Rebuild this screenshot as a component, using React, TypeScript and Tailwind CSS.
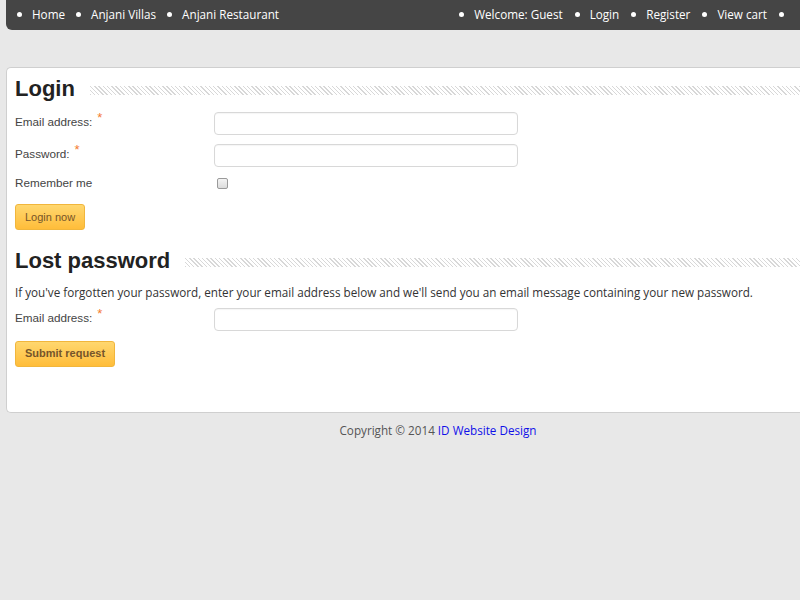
import React from "react";

const navL = ["Home", "Anjani Villas", "Anjani Restaurant"];
const navR = ["Welcome: Guest", "Login", "Register", "View cart"];

function Bullet() {
  return <span className="inline-block w-[5px] h-[5px] rounded-full bg-white mr-[10px]" />;
}

function Heading({ children }: { children: React.ReactNode }) {
  return (
    <div className="flex items-center h-[22px]">
      <h2 className="text-[22px] font-bold text-[#222] leading-[22px] font-['Liberation_Sans',Arial,sans-serif] pr-[15px]">{children}</h2>
      <div className="flex-1 h-[9px] mt-[2px] bg-[repeating-linear-gradient(45deg,#d8d8d8_0px,#d8d8d8_1px,#ffffff_1px,#ffffff_3px)]" />
    </div>
  );
}

function Req() {
  return <span className="text-[#f47a30] text-[13px] relative -top-[4px] ml-[5px]">*</span>;
}

function Row({ label, req, children }: { label: string; req?: boolean; children: React.ReactNode }) {
  return (
    <div className="flex items-start">
      <div className="w-[199px] text-[11.7px] leading-[20px] text-[#444] font-['Liberation_Sans',Arial,sans-serif]">
        {label}
        {req && <Req />}
      </div>
      {children}
    </div>
  );
}

function Input() {
  return <div className="w-[304px] h-[23px] border border-[#d8d8d8] rounded-[4px] bg-white shadow-[inset_0_1px_1px_rgba(0,0,0,0.04)]" />;
}

function Btn({ children, bold }: { children: React.ReactNode; bold?: boolean }) {
  return (
    <div className={`inline-flex items-center h-[26px] px-[9px] rounded-[3px] border border-[#f1b63c] bg-[linear-gradient(#ffd76f,#ffbd3a)] text-[11px] text-[#76552a] font-['Liberation_Sans',Arial,sans-serif] ${bold ? "font-bold" : ""}`}>
      {children}
    </div>
  );
}

export default function App() {
  return (
    <div className="w-[800px] h-[600px] bg-[#e8e8e8] overflow-hidden font-['Open_Sans',sans-serif]">
      <div className="ml-[6px] h-[30px] bg-[#454545] rounded-bl-[6px] flex items-center justify-between text-[11.7px] text-white pl-[11px] pr-[6px]">
        <div className="flex items-center gap-[11px]">
          {navL.map((t) => (
            <span key={t} className="flex items-center"><Bullet />{t}</span>
          ))}
        </div>
        <div className="flex items-center gap-[12px]">
          {navR.map((t) => (
            <span key={t} className="flex items-center"><Bullet />{t}</span>
          ))}
          <Bullet />
        </div>
      </div>
      <div className="ml-[6px] mt-[37px] h-[346px] bg-white border border-[#cfcfcf] border-r-0 rounded-l-[5px] pl-[8px] pt-[10px]">
        <Heading>Login</Heading>
        <div className="mt-[12px]"><Row label="Email address:" req><Input /></Row></div>
        <div className="mt-[9px]"><Row label="Password:" req><Input /></Row></div>
        <div className="mt-[6px]">
          <Row label="Remember me">
            <div className="ml-[3px] mt-[5px] w-[11px] h-[11px] border border-[#9a9a9a] rounded-[2px] bg-[linear-gradient(#f4f4f4,#dcdcdc)]" />
          </Row>
        </div>
        <div className="mt-[10px]"><Btn>Login now</Btn></div>
        <div className="mt-[20px]"><Heading>Lost password</Heading></div>
        <p className="mt-[11px] text-[11.7px] leading-[18px] text-[#333]">If you've forgotten your password, enter your email address below and we'll send you an email message containing your new password.</p>
        <div className="mt-[7px]"><Row label="Email address:" req><Input /></Row></div>
        <div className="mt-[8px]"><Btn bold>Submit request</Btn></div>
      </div>
      <div className="text-center text-[11.7px] text-[#555] mt-[9px] pl-[76px]">
        Copyright © 2014 <span className="text-[#1010e8]">ID Website Design</span>
      </div>
    </div>
  );
}
